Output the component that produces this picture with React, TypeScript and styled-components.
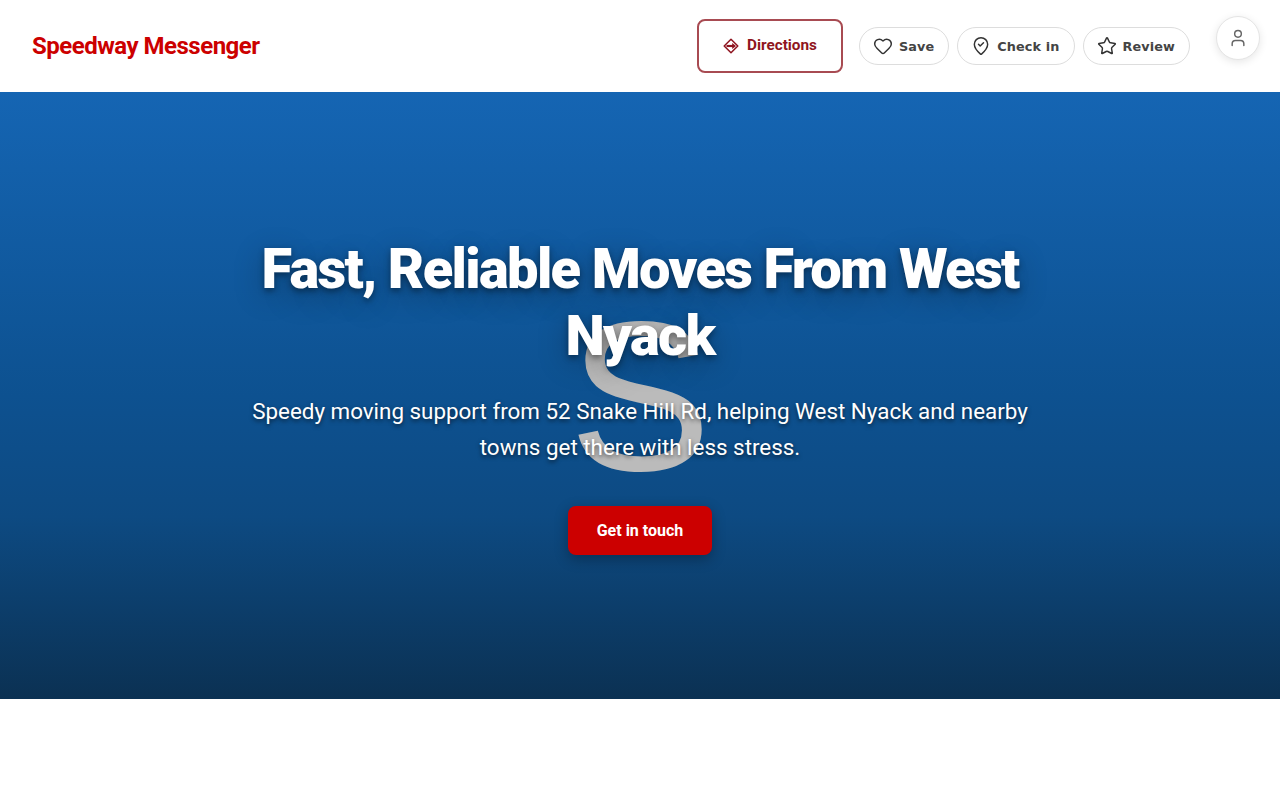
import styled, { createGlobalStyle } from "styled-components";
import { Heart, MapPinCheckInside, Star, User } from "lucide-react";

const GlobalStyle = createGlobalStyle`
  html, body {
    margin: 0;
    padding: 0;
    background: #ffffff;
  }

  * {
    box-sizing: border-box;
  }
`;

function DirectionsIcon() {
  return (
    <svg width="16" height="16" viewBox="0 0 16 16" fill="none">
      <path
        d="M8 1.2 14.8 8 8 14.8 1.2 8Z"
        stroke="currentColor"
        strokeWidth="1.5"
        strokeLinejoin="round"
      />
      <path d="M3.5 8h6.5" stroke="currentColor" strokeWidth="2.2" />
      <path d="M9.2 5 13 8l-3.8 3Z" fill="currentColor" />
    </svg>
  );
}

export default function App() {
  return (
    <Page>
      <GlobalStyle />
      <Header>
        <Logo>Speedway Messenger</Logo>
        <Actions>
          <DirectionsButton>
            <DirectionsIcon />
            Directions
          </DirectionsButton>
          <PillButton>
            <Heart size={20} strokeWidth={1.75} />
            Save
          </PillButton>
          <PillButton>
            <MapPinCheckInside size={20} strokeWidth={1.75} />
            Check in
          </PillButton>
          <PillButton>
            <Star size={20} strokeWidth={1.75} />
            Review
          </PillButton>
          <Avatar>
            <User size={20} strokeWidth={1.75} />
          </Avatar>
        </Actions>
      </Header>
      <Hero>
        <BigLetter>S</BigLetter>
        <HeroContent>
          <Title>Fast, Reliable Moves From West Nyack</Title>
          <Subtitle>
            Speedy moving support from 52 Snake Hill Rd, helping West Nyack and
            nearby towns get there with less stress.
          </Subtitle>
          <CallToAction>Get in touch</CallToAction>
        </HeroContent>
      </Hero>
    </Page>
  );
}

const Page = styled.div`
  min-height: 800px;
  background: #ffffff;
`;

const Header = styled.header`
  height: 92px;
  display: flex;
  align-items: center;
  justify-content: space-between;
  padding: 0 20px 0 32px;
  background: #ffffff;
`;

const Logo = styled.div`
  font-family: Roboto, sans-serif;
  font-size: 24px;
  font-weight: 700;
  letter-spacing: -0.5px;
  color: #cc0000;
`;

const Actions = styled.nav`
  display: flex;
  align-items: center;
  gap: 8px;
`;

const DirectionsButton = styled.button`
  width: 146px;
  height: 54px;
  margin-right: 8px;
  display: flex;
  align-items: center;
  justify-content: center;
  gap: 8px;
  padding: 0 0 2px;
  background: #ffffff;
  border: 2px solid #a84b52;
  border-radius: 8px;
  font-family: Roboto, sans-serif;
  font-size: 15.3px;
  font-weight: 700;
  color: #8f1520;

  svg {
    margin-top: 2px;
  }
`;

const PillButton = styled.button`
  height: 38px;
  display: flex;
  align-items: center;
  gap: 6px;
  padding: 0 14px 0 13px;
  background: #ffffff;
  border: 1px solid #dddddd;
  border-radius: 19px;
  font-family: "DejaVu Sans", sans-serif;
  font-size: 12.8px;
  font-weight: 700;
  letter-spacing: 0.12px;
  color: #444444;

  svg {
    color: #333333;
  }
`;

const Avatar = styled.button`
  width: 44px;
  height: 44px;
  margin: -17px 0 0 18px;
  display: flex;
  align-items: center;
  justify-content: center;
  padding: 0;
  background: #ffffff;
  border: 1px solid #e5e5e5;
  border-radius: 50%;
  box-shadow: 0 2px 8px rgba(0, 0, 0, 0.1);
  color: #666666;
`;

const Hero = styled.section`
  position: relative;
  height: 607px;
  display: flex;
  align-items: center;
  justify-content: center;
  overflow: hidden;
  background: linear-gradient(180deg, #1565b3 0%, #0d5190 50%, #0d4a82 70%, #0b3153 100%);
`;

const BigLetter = styled.div`
  position: absolute;
  top: 184px;
  left: 0;
  right: 0;
  text-align: center;
  font-family: "Liberation Sans", sans-serif;
  font-size: 214px;
  line-height: 240px;
  color: #bbbbbb;
`;

const HeroContent = styled.div`
  position: relative;
  width: 800px;
  display: flex;
  flex-direction: column;
  align-items: center;
  text-align: center;
  color: #ffffff;
`;

const Title = styled.h1`
  margin: 0 0 23px;
  font-family: Roboto, sans-serif;
  font-size: 56px;
  font-weight: 900;
  line-height: 67px;
  letter-spacing: -0.03em;
  text-shadow: 0 3px 6px rgba(0, 0, 0, 0.4), 0 8px 30px rgba(0, 0, 0, 0.3);
`;

const Subtitle = styled.p`
  margin: 0 0 41px;
  font-family: Roboto, sans-serif;
  font-size: 22.4px;
  line-height: 36px;
  color: #ffffff;
  text-shadow: 0 2px 4px rgba(0, 0, 0, 0.6);
`;

const CallToAction = styled.button`
  width: 144px;
  height: 49px;
  background: #cc0000;
  border: none;
  border-radius: 8px;
  box-shadow: 0 4px 14px rgba(0, 0, 0, 0.3);
  font-family: Roboto, sans-serif;
  font-size: 16px;
  font-weight: 700;
  color: #ffffff;
`;
